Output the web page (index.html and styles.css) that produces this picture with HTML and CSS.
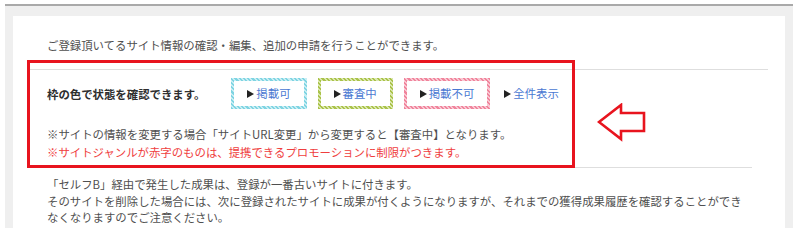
FILE: index.html
```html
<!DOCTYPE html>
<html>
    <head>
        <meta charset="utf-8">
        <link rel="stylesheet" href="styles.css">
    </head>
    <body>
        <div class="frame">
            <div class="panel">
                <p class="intro">ご登録頂いてるサイト情報の確認・編集、追加の申請を行うことができます。</p>

                <div class="status">
                    <div class="status-bar">
                        <span class="status-label">枠の色で状態を確認できます。</span>
                        <a href="#" class="status-box box-cyan"><i class="tri"></i>掲載可</a>
                        <a href="#" class="status-box box-green"><i class="tri"></i>審査中</a>
                        <a href="#" class="status-box box-pink"><i class="tri"></i>掲載不可</a>
                        <a href="#" class="status-all"><i class="tri"></i>全件表示</a>
                    </div>
                    <p class="note">※サイトの情報を変更する場合「サイトURL変更」から変更すると【審査中】となります。</p>
                    <p class="note note-red">※サイトジャンルが赤字のものは、提携できるプロモーションに制限がつきます。</p>

                    <div class="callout"></div>
                    <svg class="arrow" width="50" height="40" viewBox="0 0 50 40">
                        <polygon points="2,19 24,2 24,10 47,10 47,28 24,28 24,36" fill="none" stroke="#e8141e" stroke-width="2.6" stroke-linejoin="miter"/>
                    </svg>
                </div>

                <div class="notice">
                    <p>「セルフB」経由で発生した成果は、登録が一番古いサイトに付きます。<br>
                    そのサイトを削除した場合には、次に登録されたサイトに成果が付くようになりますが、それまでの獲得成果履歴を確認することができなくなりますのでご注意ください。</p>
                </div>
            </div>
        </div>
    </body>
</html>
```

FILE: styles.css
```css
body {
    margin: 0;
    background: #fff;
    font-family: "Noto Sans CJK JP", "Noto Sans", sans-serif;
    font-size: 11.4px;
    color: #4f4f4f;
}
.frame {
    margin: 4px 7px 0 5px;
    border-top: 2px solid #a9a9a9;
    background: #efefef;
    padding: 10px 8px 0 8px;
    height: 212px;
    overflow: hidden;
}
.panel {
    background: #fff;
    height: 100%;
    padding-top: 20px;
    box-sizing: border-box;
}
.intro {
    margin: 0 17px 15px;
    padding: 0 17px;
    line-height: 18px;
}
.status {
    position: relative;
    margin: 0 17px;
    padding: 8px 17px 6px;
    border-top: 1px solid #dedede;
}
.status-bar {
    display: flex;
    align-items: center;
}
.status-label {
    font-weight: bold;
    color: #2e2e2e;
    margin-right: 26px;
}
.tri {
    display: inline-block;
    width: 0;
    height: 0;
    border-left: 7px solid #222;
    border-top: 4px solid transparent;
    border-bottom: 4px solid transparent;
    margin-right: 2px;
    vertical-align: 0;
}
.status-box,
.status-all {
    color: #4a78d2;
    text-decoration: none;
    line-height: 17px;
}
.status-box {
    padding: 4px 13px 4px 13px;
    margin-right: 11px;
    border: 3px solid transparent;
}
.box-cyan {
    background: linear-gradient(#fff, #fff) padding-box,
        repeating-linear-gradient(45deg, #7fd4e2 0 1.5px, #c8eef4 1.5px 3px) border-box;
}
.box-green {
    background: linear-gradient(#fff, #fff) padding-box,
        repeating-linear-gradient(45deg, #aac24a 0 1.5px, #dae7ae 1.5px 3px) border-box;
}
.box-pink {
    background: linear-gradient(#fff, #fff) padding-box,
        repeating-linear-gradient(45deg, #f0849c 0 1.5px, #f9c7d2 1.5px 3px) border-box;
}
.status-all {
    margin-left: 3px;
}
.note {
    margin: 0;
    line-height: 18px;
}
.status-bar + .note {
    margin-top: 16px;
}
.note-red {
    color: #ef3e3e;
}
.callout {
    position: absolute;
    left: -3px;
    top: -10px;
    width: 548px;
    height: 108px;
    box-sizing: border-box;
    border: 3px solid #e8141e;
}
.arrow {
    position: absolute;
    left: 567px;
    top: 33px;
}
.notice {
    margin: 0 33px 0 17px;
    padding: 8px 0 0 17px;
    border-top: 1px solid #dedede;
}
.notice p {
    margin: 0;
    line-height: 16.5px;
}
```
